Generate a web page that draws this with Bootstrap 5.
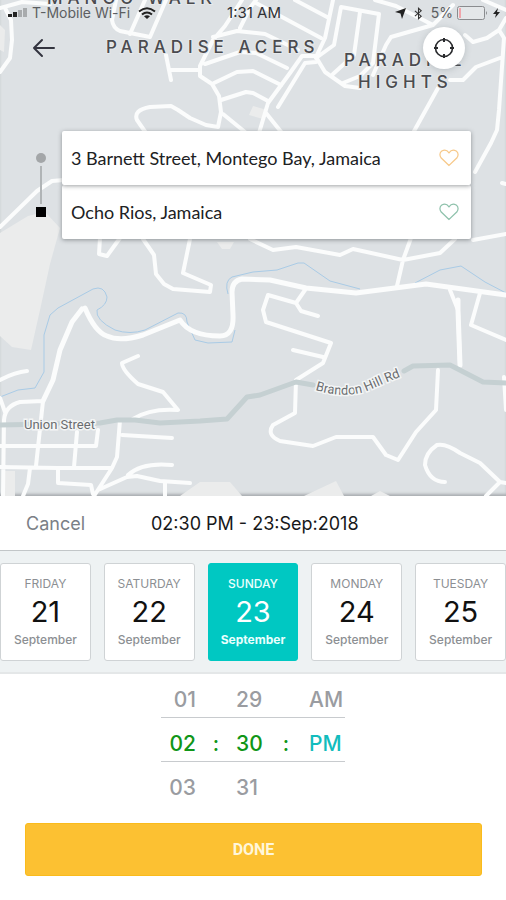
<!DOCTYPE html>
<html lang="en">
<head>
<meta charset="utf-8">
<meta name="viewport" content="width=device-width, initial-scale=1">
<title>Schedule a ride</title>
<link href="https://cdn.jsdelivr.net/npm/bootstrap@5.3.0/dist/css/bootstrap.min.css" rel="stylesheet">
<style>
body { font-family: Inter, "Liberation Sans", sans-serif; background: #fff; color: #17181a; }
.map-area { background: #dde1e4; box-shadow: inset 0 -3px 3px -1px #a9adb0; }
.map-canvas { z-index: 0; }
.map-front { z-index: 1; }
.place-label { font-size: 17px; font-weight: 500; letter-spacing: 5px; fill: #4a4b4f; stroke: #e6e9eb; stroke-width: 2px; paint-order: stroke; }
.street-label { font-family: Roboto, sans-serif; font-size: 13px; fill: #6a6c6f; stroke: #f3f5f5; stroke-width: 3px; paint-order: stroke; }
.status-row { height: 26px; font-size: 14px; line-height: 26px; grid-template-columns: 1fr auto 1fr; padding: 0 6px 0 8px; }
.status-row .carrier { color: #5c5e61; }
.status-row .clock { font-size: 15px; color: #303134; }
.tool-row { padding: 0 41px 0 30px; height: 44px; }
.locate-btn { width: 42px; height: 42px; box-shadow: 0 1px 6px rgba(80, 90, 100, .25); }
.route { padding: 61px 35px 0 30px; }
.route-rail { width: 22px; padding: 22px 0; margin-right: 10px; }
.stop-start { width: 10px; height: 10px; background: #a3a6a8; }
.stop-line { width: 2px; margin: 3px 0; background: #b0b4b6; }
.stop-end { width: 10px; height: 10px; background: #000; }
.stop-field { height: 54px; padding: 0 12px 0 9px; border-radius: 2px; box-shadow: 0 1px 4px rgba(60, 65, 70, .5); }
.stop-field input { font-family: Lato, sans-serif; font-size: 18px; color: #202123; padding: 0; }
.sheet-head { height: 55px; padding: 0 26px; font-size: 18px; border-bottom: 1px solid #c2c6c8; }
.sheet-head .cancel { width: 125px; font-size: 18px; color: #7b8086; }
.day-strip { gap: 13px; padding: 12px 0 11px; background: #eef2f3; border-bottom: 2px solid #e4e7e8; }
.day-btn { height: 98px; flex: 1 1 0; border: 1px solid #cfd3d5; border-radius: 3px; color: #8c8f93; }
.day-btn .weekday { font-size: 12px; line-height: 18px; }
.day-btn .day-num { font-size: 29px; line-height: 38px; color: #111; }
.day-btn .month { font-size: 12px; line-height: 18px; font-weight: 500; letter-spacing: normal; }
.day-btn.chosen { background: #00c8c2; border-color: #00c8c2; color: #e9fffd; }
.day-btn.chosen .day-num { color: #fff; }
.day-btn.chosen .weekday { font-weight: 500; }
.day-btn.chosen .month { font-weight: 700; }
.time-wheel { padding: 4px 0 17px; }
.wheel-row { display: grid; grid-template-columns: 35px 40px 27px 46px 36px; height: 39px; line-height: 44px; font-size: 21px; font-weight: 500; color: #9a9ca1; }
.wheel-row.current { height: 45px; line-height: 52px; color: #109618; border-top: 1px solid #c8cbce; border-bottom: 1px solid #c8cbce; }
.wheel-row.after { height: 44px; line-height: 52px; }
.wheel-row.current .meridiem { color: #12bcbd; }
.done-wrap { padding: 0 24px 24px 25px; }
.done-btn { height: 53px; border-radius: 3px; border: 1px solid #fabb1c; background: #fcc132; color: #fff6da; font-family: Roboto, sans-serif; font-size: 16px; font-weight: 700; }
</style>
<script src="https://cdn.jsdelivr.net/npm/bootstrap@5.3.0/dist/js/bootstrap.bundle.min.js"></script>
</head>
<body>
<main class="d-flex flex-column min-vh-100">

<section class="map-area position-relative flex-grow-1 overflow-hidden" aria-label="Map">
  <svg class="map-canvas position-absolute top-0 start-0 w-100 h-100" viewBox="0 0 506 496" preserveAspectRatio="xMidYMin slice" role="img" aria-label="Street map">
    <!-- open land -->
    <g fill="#ebecec">
      <path d="M0 233 28 216 45 212 60 228 50 264 40 310 31 350 12 347 0 336zM180 496 200 482H230L242 496zM304 496 336 481 344 496zM3 471H15V496H3zM371 496 380 491 390 496zM217 242H234L230 249H222zM0 25 5 30 4 52 0 50zM253 106 267 110 263 119 249 115z"/>
    </g>
    <!-- water -->
    <g fill="none" stroke="#a9cbe6" stroke-width="1">
      <path d="M0 397 18 390 35 388 44 372V335L50 315 58 308 93 289Q104 285 107 297 107 305 97 310 95 320 115 330 130 335 145 330L178 313Q187 312 187 322L195 340 208 343 232 342 235 330M228 294Q224 281 232 277L253 272 277 270 298 263H304L330 281 360 289M415 283 440 270 461 266 485 282 506 293"/>
    </g>
    <!-- streets -->
    <g fill="none" stroke="#fbfcfc" stroke-width="4" stroke-linejoin="round" stroke-linecap="round">
      <path d="M0 8 22 2 50 4M5 8 11 20 12 40 10 58 0 72M116 0 112 20Q113 28 120 31L150 37 166 0M130 34 145 0M166 55 171 80M170 70H200"/>
      <path d="M242 0 225 26 213 40 200 66V76L212 84 219 96 221 112 218 127 206 125 190 118 178 110 171 106 150 107Q133 110 137 120L146 133M213 37 237 31 265 34 298 50M240 28 250 8 256 0M205 64 240 52 256 53 287 68M214 83 237 72 253 71 281 85M221 100 246 92 253 93 268 101M223 114 245 132"/>
      <path d="M333 0 325 38 316 57 325 72 345 86 360 88M341 7 379 14 373 63 360 76 343 83M341 7 334 45 316 58M360 12 354 55 333 74M295 0 327 17M256 3 321 38M316 62 305 63 278 107M316 56 302 56 290 73 268 103 259 133M266 113 282 133"/>
      <path d="M375 0 396 6 433 25 453 5M433 25 391 37 386 45 373 75M465 35 473 42 487 38 499 30 506 18M499 30 504 38 499 110 497 130 491 143 475 172M450 80H463L476 67 500 58M438 88 413 133M483 0 506 10"/>
      <path d="M0 227 37 191 52 181 64 180M100 238 99 254 107 256 120 238M143 239 154 255 156 274 164 284 173 289 210 292 211 285 183 273 190 239"/>
      <path d="M250 239 273 250 296 247 340 255 353 249 403 260 440 253 455 239M411 238 403 260 397 286M473 240 506 234M502 183 506 184"/>
      <path stroke-width="5" d="M82 309 72 322 60 350 53 380 43 401M85 308Q95 332 107 336 120 342 143 335L180 320Q190 336 220 336 234 336 233 315L232 292Q232 281 242 279L270 280 306 288 356 293 426 284 506 295"/>
      <path d="M305 290 296 303 268 295 263 310 266 322 331 343 323 363 296 380 295 413 273 425Q266 435 280 441L313 446 336 437H373L386 455 398 460 416 432 436 410 438 370M296 303 301 311 318 316M293 350 323 357M450 290 458 310 460 365M480 293 471 325 506 340M445 482Q430 482 425 465 425 453 437 445 446 443 460 453L480 463 500 482 486 496M500 482 506 483M504 377 506 410"/>
      <path stroke-width="5" d="M458 300V310L460 365"/>
      <path d="M0 380Q15 372 27 371M138 356 122 363Q122 370 138 384L163 392 178 410Q150 408 133 419M43 401 20 402Q5 406 4 420L3 496M43 401 36 466M0 446H96L98 430M77 432 74 467M0 467 58 468H112M120 420 117 457 112 468 94 496M122 435 172 438M98 490 127 477 137 476 160 481 190 483M128 475Q142 462 172 465M58 468V483L91 485 93 494M30 468 28 484 23 496M165 482V496M0 398 5 412"/>
      <path stroke="#c5d0d2" stroke-width="5" d="M0 425 100 423 117 420H135L160 423 200 421 227 419 247 397 260 395 296 382 313 385M404 371 413 366 450 365 483 382 506 383"/>
    </g>
    <path id="brandon" fill="none" d="M315 390Q348 400 372 389T414 372"/>
    <text class="place-label" x="47" y="4">MANGO WALK</text>
    <text class="place-label" x="106" y="53">PARADISE ACERS</text>
    <text class="place-label" x="344" y="66">PARADISE</text>
    <text class="place-label" x="358" y="88">HIGHTS</text>
    <text class="street-label" x="24" y="429">Union Street</text>
    <text class="street-label"><textPath href="#brandon">Brandon Hill Rd</textPath></text>
  </svg>

  <div class="map-front position-relative">
    <div class="status-row d-grid">
      <div class="carrier d-flex align-items-center gap-1">
        <svg width="20" height="10" viewBox="0 0 20 10" aria-hidden="true"><path fill="#222" d="M0 6h4v3H0zM5 4h4v5H5z"/><path fill="#a8abad" d="M10 2h4v7h-4zM15 0h4v9h-4z"/></svg>
        <span>T-Mobile Wi-Fi</span>
        <svg class="ms-1" width="18" height="12" viewBox="0 0 18 12" fill="none" stroke="#222" stroke-width="2" aria-hidden="true"><path d="M1 4.500Q9-2 17 4.500M4 7.500q5-4 10 0"/><path fill="#222" stroke="none" d="M6 9.300q3-2 6 0L9 12z"/></svg>
      </div>
      <div class="clock">1:31 AM</div>
      <div class="carrier d-flex align-items-center justify-content-end gap-1">
        <svg width="11" height="11" viewBox="0 0 11 11" aria-hidden="true"><path fill="#222" d="M11 0 7 11 5.500 5.500 0 4z"/></svg>
        <svg class="mx-1" width="9" height="13" viewBox="0 0 10 13" fill="none" stroke="#333" stroke-width="1.200" aria-hidden="true"><path d="m1 3.500 7 6L5 12.300V.700l3 2.800-7 6"/></svg>
        <span>5%</span>
        <svg width="32" height="14" viewBox="0 0 32 14" aria-hidden="true"><rect x=".5" y=".5" width="27" height="13" rx="2" fill="#e4e7e9" stroke="#8a8c8f"/><path fill="#f0a5ab" d="M2 2h2v10H2z"/><path fill="#8a8c8f" d="M29 5q2 2 0 4z"/></svg>
        <svg width="7" height="10" viewBox="0 0 7 10" aria-hidden="true"><path fill="#222" d="M5 0 0 6h3L2 10l5-6H4z"/></svg>
      </div>
    </div>
    <div class="tool-row d-flex justify-content-between align-items-center">
      <button type="button" class="btn border-0 p-0 d-flex" aria-label="Back">
        <svg width="26" height="20" viewBox="0 0 26 20" fill="none" stroke="#33343f" stroke-width="2" stroke-linecap="round" stroke-linejoin="round"><path d="M24 10H4M12 2 4 10l8 8"/></svg>
      </button>
      <button type="button" class="locate-btn btn bg-white border-0 rounded-circle p-0 d-flex align-items-center justify-content-center" aria-label="My location">
        <svg width="22" height="22" viewBox="0 0 22 22" fill="none" stroke="#292a2d" stroke-width="2"><circle cx="11" cy="11" r="8.500" stroke-width="1.600"/><path d="M11 1v4M11 17v4M1 11h4M17 11h4"/></svg>
      </button>
    </div>
    <form class="route d-flex">
      <div class="route-rail d-flex flex-column align-items-center" aria-hidden="true">
        <span class="stop-start rounded-circle"></span>
        <span class="stop-line flex-grow-1"></span>
        <span class="stop-end"></span>
      </div>
      <div class="flex-grow-1 d-flex flex-column">
        <div class="stop-field bg-white d-flex align-items-center position-relative z-1">
          <input type="text" class="form-control border-0 bg-transparent shadow-none" aria-label="Pick-up address" value="3 Barnett Street, Montego Bay, Jamaica">
          <button type="button" class="btn border-0 p-0 d-flex" aria-label="Save pick-up address">
            <svg width="20" height="18" viewBox="0 0 20 18" fill="none" stroke="#f7c98a" stroke-width="1.200"><path d="M10 16.500 2 8.800Q-.5 4.500 2.800 2 7-.500 10 3.800 13-.500 17.200 2 20.500 4.500 18 8.800z"/></svg>
          </button>
        </div>
        <div class="stop-field bg-white d-flex align-items-center">
          <input type="text" class="form-control border-0 bg-transparent shadow-none" aria-label="Destination" value="Ocho Rios, Jamaica">
          <button type="button" class="btn border-0 p-0 d-flex" aria-label="Save destination">
            <svg width="20" height="18" viewBox="0 0 20 18" fill="none" stroke="#8fc2ac" stroke-width="1.200"><path d="M10 16.500 2 8.800Q-.5 4.500 2.800 2 7-.500 10 3.800 13-.500 17.200 2 20.500 4.500 18 8.800z"/></svg>
          </button>
        </div>
      </div>
    </form>
  </div>
</section>

<section class="bg-white" aria-label="Pick-up time">
  <div class="sheet-head d-flex align-items-center">
    <button type="button" class="cancel btn border-0 p-0 text-start">Cancel</button>
    <span>02:30 PM - 23:Sep:2018</span>
  </div>

  <div class="day-strip d-flex">
    <button type="button" class="day-btn btn bg-white p-0"><span class="weekday d-block">FRIDAY</span><span class="day-num d-block">21</span><span class="month d-block">September</span></button>
    <button type="button" class="day-btn btn bg-white p-0"><span class="weekday d-block">SATURDAY</span><span class="day-num d-block">22</span><span class="month d-block">September</span></button>
    <button type="button" class="day-btn chosen btn p-0" aria-pressed="true"><span class="weekday d-block">SUNDAY</span><span class="day-num d-block">23</span><span class="month d-block">September</span></button>
    <button type="button" class="day-btn btn bg-white p-0"><span class="weekday d-block">MONDAY</span><span class="day-num d-block">24</span><span class="month d-block">September</span></button>
    <button type="button" class="day-btn btn bg-white p-0"><span class="weekday d-block">TUESDAY</span><span class="day-num d-block">25</span><span class="month d-block">September</span></button>
  </div>

  <div class="time-wheel d-flex flex-column align-items-center">
    <div class="wheel-row"><span class="text-end">01</span><span></span><span>29</span><span></span><span>AM</span></div>
    <div class="wheel-row current"><span class="text-end">02</span><span class="text-center">:</span><span>30</span><span class="text-center">:</span><span class="meridiem">PM</span></div>
    <div class="wheel-row after"><span class="text-end">03</span><span></span><span>31</span><span></span><span></span></div>
  </div>

  <div class="done-wrap"><button type="submit" class="done-btn btn w-100 p-0">DONE</button></div>
</section>
</main>
</body>
</html>
